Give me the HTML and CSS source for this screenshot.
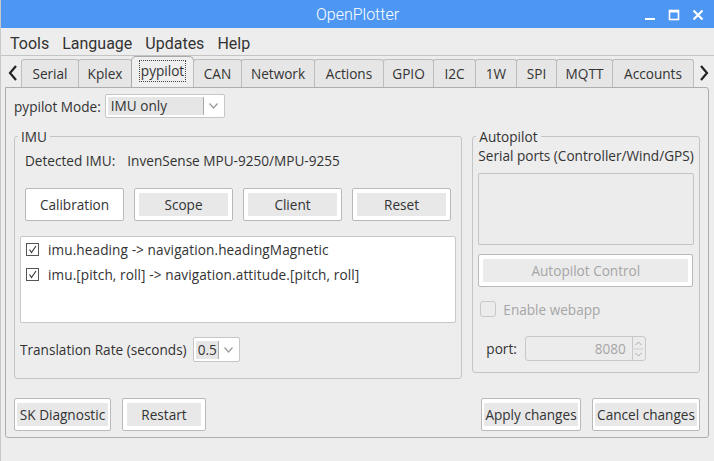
FILE: index.html
```html
<!DOCTYPE html>
<html>
<head>
<meta charset="utf-8">
<link rel="stylesheet" href="styles.css">
</head>
<body>
<div class="window">
  <div class="titlebar">
    <span class="title">OpenPlotter</span>
    <div class="wincontrols">
      <svg width="12" height="12" viewBox="0 0 12 12"><rect x="1" y="9" width="10" height="2" fill="#fff"/></svg>
      <svg width="12" height="12" viewBox="0 0 12 12"><rect x="1.5" y="1.5" width="9" height="9" fill="none" stroke="#fff" stroke-width="1.6"/><rect x="1" y="1" width="10" height="2.5" fill="#fff"/></svg>
      <svg width="12" height="12" viewBox="0 0 12 12"><path d="M1.5 1.5 L10.5 10.5 M10.5 1.5 L1.5 10.5" stroke="#fff" stroke-width="2.2"/></svg>
    </div>
  </div>
  <div class="menubar">
    <span>Tools</span><span>Language</span><span>Updates</span><span>Help</span>
  </div>
  <div class="tabrow">
    <span class="arrow">
      <svg width="12" height="18" viewBox="0 0 12 18"><path d="M9 2 L3 9 L9 16" fill="none" stroke="#222" stroke-width="2.2"/></svg>
    </span>
    <div class="tabs">
      <div class="tab w-serial">Serial</div>
      <div class="tab w-kplex">Kplex</div>
      <div class="tab sel w-pypilot"><span class="focus">pypilot</span></div>
      <div class="tab w-can">CAN</div>
      <div class="tab w-network">Network</div>
      <div class="tab w-actions">Actions</div>
      <div class="tab w-gpio">GPIO</div>
      <div class="tab w-i2c">I2C</div>
      <div class="tab w-1w">1W</div>
      <div class="tab w-spi">SPI</div>
      <div class="tab w-mqtt">MQTT</div>
      <div class="tab w-accounts">Accounts</div>
    </div>
    <span class="arrow">
      <svg width="12" height="18" viewBox="0 0 12 18"><path d="M3 2 L9 9 L3 16" fill="none" stroke="#222" stroke-width="2.2"/></svg>
    </span>
  </div>
  <div class="panel">
    <div class="moderow">
      <span class="lbl">pypilot Mode:</span>
      <div class="combo mode">
        <span class="ctext">IMU only</span>
        <span class="csep"></span>
        <svg class="chev" width="9" height="6" viewBox="0 0 9 6"><path d="M0.5 0.5 L4.5 5 L8.5 0.5" fill="none" stroke="#999" stroke-width="1.2"/></svg>
      </div>
    </div>
    <div class="groups">
      <fieldset class="group imu">
        <legend>IMU</legend>
        <div class="detected"><span>Detected IMU:</span><span>InvenSense MPU-9250/MPU-9255</span></div>
        <div class="btnrow">
          <div class="btn hover">Calibration</div>
          <div class="btn"><span class="bin">Scope</span></div>
          <div class="btn"><span class="bin">Client</span></div>
          <div class="btn"><span class="bin">Reset</span></div>
        </div>
        <div class="listbox">
          <div class="chkrow"><span class="cb"><svg width="9" height="9" viewBox="0 0 9 9"><path d="M1.5 4.5 L3.5 7.5 L8 1" fill="none" stroke="#333" stroke-width="1.1"/></svg></span>imu.heading -&gt; navigation.headingMagnetic</div>
          <div class="chkrow"><span class="cb"><svg width="9" height="9" viewBox="0 0 9 9"><path d="M1.5 4.5 L3.5 7.5 L8 1" fill="none" stroke="#333" stroke-width="1.1"/></svg></span>imu.[pitch, roll] -&gt; navigation.attitude.[pitch, roll]</div>
        </div>
        <div class="raterow">
          <span class="lbl">Translation Rate (seconds)</span>
          <div class="combo rate">
            <span class="ctext">0.5</span>
            <span class="csep"></span>
            <svg class="chev" width="9" height="6" viewBox="0 0 9 6"><path d="M0.5 0.5 L4.5 5 L8.5 0.5" fill="none" stroke="#999" stroke-width="1.2"/></svg>
          </div>
        </div>
      </fieldset>
      <fieldset class="group auto">
        <legend>Autopilot</legend>
        <div class="serial">Serial ports (Controller/Wind/GPS)</div>
        <div class="plist"></div>
        <div class="btn wide disabled"><span class="bin">Autopilot Control</span></div>
        <div class="webapp"><span class="cb round"></span>Enable webapp</div>
        <div class="portrow">
          <span class="lbl">port:</span>
          <div class="spin">
            <span class="sval">8080</span>
            <span class="sbtn">
              <svg width="9" height="22" viewBox="0 0 9 22"><path d="M1.5 7 L4.5 4 L7.5 7" fill="none" stroke="#aaa" stroke-width="1"/><path d="M0 11 H9" stroke="#ccc"/><path d="M1.5 15 L4.5 18 L7.5 15" fill="none" stroke="#aaa" stroke-width="1"/></svg>
            </span>
          </div>
        </div>
      </fieldset>
    </div>
    <div class="bottom">
      <div class="left">
        <div class="btn b-sk"><span class="bin">SK Diagnostic</span></div>
        <div class="btn b-restart"><span class="bin">Restart</span></div>
      </div>
      <div class="right">
        <div class="btn b-apply"><span class="bin">Apply changes</span></div>
        <div class="btn b-cancel"><span class="bin">Cancel changes</span></div>
      </div>
    </div>
  </div>
</div>
</body>
</html>
```
FILE: styles.css
```css
* { box-sizing: border-box; }
html, body { margin: 0; padding: 0; }
body {
  width: 714px;
  height: 461px;
  background: #ededed;
  font-family: "Open Sans", "Noto Sans", sans-serif;
  font-size: 13.6px;
  color: #333;
  overflow: hidden;
}
.window {
  width: 714px;
  height: 461px;
  border-left: 1px solid #c8c8c8;
  display: flex;
  flex-direction: column;
}
.titlebar {
  height: 28px;
  background: #4d97f3;
  display: flex;
  align-items: center;
  justify-content: center;
  position: relative;
}
.title {
  font-family: Roboto, sans-serif;
  font-weight: 300;
  font-size: 16px;
  color: #fff;
}
.wincontrols {
  position: absolute;
  right: 10px;
  top: 9px;
  display: flex;
  gap: 12px;
}
.menubar {
  height: 28px;
  display: flex;
  align-items: center;
  padding-left: 9px;
  padding-top: 3px;
  gap: 13px;
  font-family: Roboto, sans-serif;
  font-size: 16px;
  color: #333;
  border-bottom: 1px solid #c4c4c4;
}
.tabrow {
  height: 31px;
  display: flex;
  align-items: flex-end;
  padding-left: 4px;
}
.arrow {
  width: 16px;
  height: 28px;
  display: flex;
  align-items: center;
  justify-content: center;
}
.tabs {
  display: flex;
  align-items: flex-end;
  width: 675px;
}
.tab {
  height: 28px;
  border: 1px solid #bdbdbd;
  border-bottom: none;
  border-radius: 3px 3px 0 0;
  background: #e6e6e6;
  display: flex;
  align-items: center;
  justify-content: center;
  margin-right: -1px;
  color: #333;
}
.tab.sel {
  height: 31px;
  background: #efefef;
  border-color: #a9a9a9;
  border-radius: 5px 5px 0 0;
  padding-bottom: 2px;
}
.focus { border: 1px dotted #444; padding: 0 1px; line-height: 20px; }
.w-serial { width: 58px; }
.w-kplex { width: 54px; }
.w-pypilot { width: 63px; }
.w-can { width: 49px; }
.w-network { width: 74px; }
.w-actions { width: 70px; }
.w-gpio { width: 51px; }
.w-i2c { width: 43px; }
.w-1w { width: 42px; }
.w-spi { width: 41px; }
.w-mqtt { width: 57px; }
.w-accounts { width: 82px; }
.panel {
  margin-left: 4px;
  width: 704px;
  height: 351px;
  border: 1px solid #adadad;
  border-radius: 0 3px 3px 3px;
  background: #ededed;
  padding: 6px 8px 0 8px;
  display: flex;
  flex-direction: column;
}
.moderow {
  display: flex;
  align-items: center;
  gap: 4px;
  height: 24px;
}
.combo {
  height: 24px;
  background: #fff;
  border: 1px solid #c6c6c6;
  border-radius: 2px;
  padding: 2px;
  display: flex;
  align-items: center;
}
.combo .ctext {
  background: #e6e6e6;
  height: 18px;
  line-height: 18px;
  padding-left: 3px;
  flex: 1;
}
.combo .csep { width: 1px; height: 18px; background: #aaa; }
.combo .chev { margin: 0 4px 0 5px; }
.combo.mode { width: 120px; }
.combo.rate { width: 47px; height: 25px; }
.combo.rate .ctext { padding-left: 2px; }
.groups {
  display: flex;
  gap: 10px;
  margin-top: 9px;
  align-items: flex-start;
}
fieldset.group {
  margin: 0;
  border: 1px solid #c4c4c4;
  border-radius: 3px;
  padding: 0;
}
legend {
  font-size: 13.6px;
  line-height: 19px;
  padding: 0 3px;
  margin-left: -2px;
  color: #333;
}
.imu {
  width: 449px;
  height: 252px;
  padding: 4px 5px 0 5px !important;
}
.auto {
  width: 228px;
  height: 246px;
  padding: 0 5px 0 5px !important;
}
.detected {
  display: flex;
  gap: 12px;
  padding-left: 5px;
  height: 20px;
  align-items: center;
}
.btnrow {
  display: flex;
  gap: 10px;
  margin-top: 18px;
  padding-left: 5px;
}
.btn {
  width: 99px;
  height: 33px;
  border: 1px solid #b9b9b9;
  border-radius: 2px;
  background: #fff;
  padding: 4px;
  display: flex;
  align-items: stretch;
  color: #333;
}
.btn .bin {
  flex: 1;
  background: #e8e8e8;
  display: flex;
  align-items: center;
  justify-content: center;
  white-space: nowrap;
}
.btn.hover { align-items: center; justify-content: center; }
.listbox {
  margin-top: 15px;
  height: 87px;
  background: #fff;
  border: 1px solid #c6c6c6;
  border-radius: 2px;
  padding: 0 5px;
}
.chkrow {
  height: 25px;
  display: flex;
  align-items: center;
  gap: 9px;
  letter-spacing: 0.1px;
}
.cb {
  width: 13px;
  height: 13px;
  border: 1px solid #555;
  display: flex;
  align-items: center;
  justify-content: center;
  background: #fff;
}
.raterow {
  display: flex;
  align-items: center;
  gap: 6px;
  margin-top: 14px;
}
.serial {
  height: 20px;
  display: flex;
  align-items: center;
  margin-top: -1px;
  white-space: nowrap;
}
.plist {
  margin-top: 8px;
  height: 72px;
  border: 1px solid #c4c4c4;
  border-radius: 2px;
  background: #ececec;
}
.btn.wide {
  width: 215px;
  margin-top: 9px;
  height: 33px;
}
.btn.disabled { color: #a6a6a6; }
.btn.disabled .bin { background: #ebebeb; }
.webapp {
  display: flex;
  align-items: center;
  gap: 7px;
  margin-top: 12px;
  padding-left: 2px;
  color: #a6a6a6;
  height: 20px;
}
.cb.round {
  width: 16px;
  height: 16px;
  border: 1px solid #c8c8c8;
  border-radius: 3px;
  background: #ececec;
}
.portrow {
  display: flex;
  align-items: center;
  gap: 8px;
  margin-top: 17px;
  padding-left: 8px;
}
.portrow .lbl { color: #333; }
.spin {
  width: 121px;
  height: 25px;
  border: 1px solid #c8c8c8;
  border-radius: 3px;
  background: #ececec;
  display: flex;
  align-items: center;
}
.sval {
  flex: 1;
  text-align: right;
  padding-right: 6px;
  color: #a6a6a6;
}
.sbtn {
  width: 13px;
  height: 23px;
  border-left: 1px solid #c8c8c8;
  display: flex;
  align-items: center;
  justify-content: center;
}
.bottom {
  display: flex;
  justify-content: space-between;
  margin-top: 19px;
}
.bottom .left, .bottom .right { display: flex; gap: 11px; }
.b-sk { width: 97px; padding: 4px 2px; }
.b-restart { width: 84px; }
.b-apply { width: 100px; padding: 4px 2px; }
.b-cancel { width: 108px; padding: 4px 2px; }
```
